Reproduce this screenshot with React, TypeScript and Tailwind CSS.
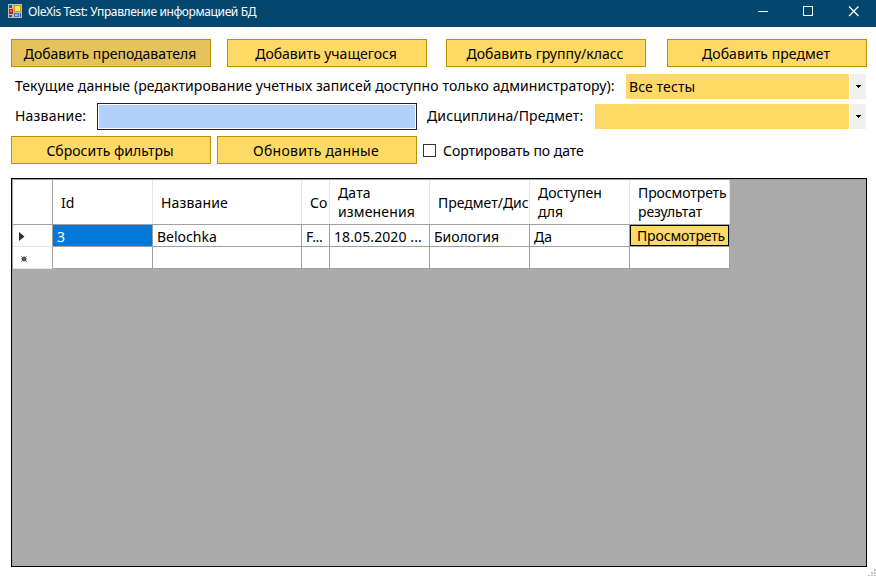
import type { ReactNode } from "react";

function Btn({ children, className = "" }: { children: ReactNode; className?: string }) {
  return (
    <button className={`flex h-7 w-[200px] shrink-0 items-center justify-center whitespace-nowrap border border-[#bf9000] pr-[2px] pt-[2px] ${className}`}>
      {children}
    </button>
  );
}

function Combo({ children, className = "" }: { children?: ReactNode; className?: string }) {
  return (
    <div className={`flex h-[25px] shrink-0 gap-px ${className}`}>
      <div className="flex flex-1 items-center bg-[#ffd966] pl-[3px] tracking-[0.1px]">{children}</div>
      <div className="flex w-4 items-center justify-center bg-[#f0f0f0]">
        <svg width="5" height="3" shapeRendering="crispEdges"><path d="M0 0h5v1H4v1H3v1H2V2H1V1H0z" /></svg>
      </div>
    </div>
  );
}

function AppIcon() {
  return (
    <svg width="14" height="14" shapeRendering="crispEdges">
      <path fill="#b9bec3" d="M0 0h14v14H0z" />
      <path fill="#41546b" d="M1 1h3v3H1zM1 11h3v2H1zM12 9h1v4h-1z" />
      <path fill="#b52012" d="M1 5h4v5H1z" />
      <path fill="#e86d5a" d="M2 6h2v2H2z" />
      <path fill="#d69a00" d="M6 1h7v7H6z" />
      <path fill="#ffe36c" d="M7 2h5v5H7z" />
      <path fill="#3973dc" d="M6 9h5v4H6z" />
      <path fill="#8db8ff" d="M7 10h3v2H7z" />
    </svg>
  );
}

const head = "flex h-[44px] items-center overflow-hidden whitespace-nowrap border-r border-[#e5e5e5] pl-2 leading-[19px]";
const cell = "flex h-[22px] items-center overflow-hidden whitespace-nowrap border-b border-r border-[#a0a0a0] pl-1 pt-[3px]";

export default function App() {
  return (
    <div className="flex h-[576px] w-[876px] flex-col overflow-hidden bg-white font-['Noto_Sans','Open_Sans',sans-serif] text-[14px] leading-[20px] text-black">
      <header className="flex h-[27px] shrink-0 items-start bg-[#05466e] text-white">
        <div className="pl-2 pt-1"><AppIcon /></div>
        <div className="ml-[6px] mt-[2px] flex-1 whitespace-nowrap text-[12px] tracking-[-0.39px]">OleXis Test: Управление информацией БД</div>
        <svg width="118" height="22" fill="none" stroke="white" className="shrink-0">
          <path d="M0 11.5h10M45.5 6.5h9v9h-9z" shapeRendering="crispEdges" />
          <path strokeWidth="1.3" d="M91 6.5l9.5 9.5m0-9.5l-9.5 9.5" />
        </svg>
      </header>
      <main className="flex flex-1 flex-col pl-[11px] pt-3">
        <div className="flex">
          <Btn className="bg-[#e5c35c]">Добавить преподавателя</Btn>
          <Btn className="ml-4 bg-[#ffd966]">Добавить учащегося</Btn>
          <Btn className="ml-[19px] bg-[#ffd966]">Добавить группу/класс</Btn>
          <Btn className="ml-[21px] bg-[#ffd966] tracking-[0.07px]">Добавить предмет</Btn>
        </div>
        <div className="mt-[7px] flex h-[25px]">
          <div className="w-[615px] shrink-0 whitespace-nowrap pl-1 pt-[2px] tracking-[0.09px]">Текущие данные (редактирование учетных записей доступно только администратору):</div>
          <Combo className="w-[240px]">Все тесты</Combo>
        </div>
        <div className="mt-1 flex h-[27px]">
          <label className="w-[86px] shrink-0 whitespace-nowrap pl-1 pt-[3px] tracking-[0.2px]">Название:</label>
          <div className="w-[320px] shrink-0 border border-[#222] bg-white p-px"><div className="h-full bg-[#b2d2fc]" /></div>
          <label className="w-[178px] shrink-0 whitespace-nowrap pl-[10px] pt-[3px] tracking-[0.15px]">Дисциплина/Предмет:</label>
          <Combo className="mt-px w-[271px]" />
        </div>
        <div className="mt-[6px] flex">
          <Btn className="bg-[#ffd966]">Сбросить фильтры</Btn>
          <Btn className="ml-[6px] bg-[#ffd966] tracking-[0.25px]">Обновить данные</Btn>
          <div className="ml-[6px] mt-2 h-[13px] w-[13px] border border-[#333]" />
          <span className="ml-[7px] mt-[5px] whitespace-nowrap tracking-[-0.05px]">Сортировать по дате</span>
        </div>
        <div className="mt-[14px] h-[389px] w-[856px] border border-black bg-[#ababab]">
          <div className="h-full border-l border-t border-[#a0a0a0]">
            <div className="grid w-[717px] grid-cols-[40px_100px_149px_28px_100px_100px_100px_100px] bg-white">
              <div className="h-[44px] border-r border-[#a0a0a0]" />
              <div className={head}>Id</div>
              <div className={`${head} tracking-[0.15px]`}>Название</div>
              <div className={head}>Со</div>
              <div className={`${head} tracking-[0.15px]`}><span>Дата<br />изменения</span></div>
              <div className={head}>Предмет/Дис</div>
              <div className={head}><span>Доступен<br />для</span></div>
              <div className={`${head} tracking-[-0.1px]`}><span>Просмотреть<br />результат</span></div>
              <div className="col-span-8 h-px bg-[#a0a0a0]" />
              <div className="flex h-[22px] items-center border-b border-r border-b-[#e5e5e5] border-r-[#a0a0a0] pl-[6px] pt-[2px]">
                <svg width="6" height="10"><path d="M0 0L5.5 4.5L0 9z" fill="#333" /></svg>
              </div>
              <div className={`${cell} bg-[#0078d7] text-white`}>3</div>
              <div className={cell}>Belochka</div>
              <div className={`${cell} tracking-[-0.3px]`}>F...</div>
              <div className={`${cell} tracking-[0.1px]`}>18.05.2020 ...</div>
              <div className={cell}>Биология</div>
              <div className={cell}>Да</div>
              <div className="h-[22px] border-b border-r border-[#a0a0a0]">
                <button className="flex h-[21px] w-[99px] items-center whitespace-nowrap border border-black bg-[#ffd966] pl-[6px] pt-px tracking-[-0.15px]">Просмотреть</button>
              </div>
              <div className="flex h-[22px] items-center border-b border-r border-b-[#e5e5e5] border-r-[#a0a0a0] pl-2 pt-[3px]">
                <svg width="6" height="6"><path d="M0 0L6 6M6 0L0 6" stroke="#999" /><circle cx="3" cy="3" r="2.5" fill="#555" /></svg>
              </div>
              {[1, 2, 3, 4, 5, 6, 7].map((i) => <div key={i} className={cell} />)}
            </div>
          </div>
        </div>
        <div className="flex h-[9px] shrink-0 items-end justify-end">
          <svg width="8" height="7" fill="#bfbfbf" shapeRendering="crispEdges">
            <path d="M6 0h2v2H6zM3 3h2v2H3zM6 3h2v2H6zM0 6h2v1H0zM3 6h2v1H3zM6 6h2v1H6z" />
          </svg>
        </div>
      </main>
    </div>
  );
}
